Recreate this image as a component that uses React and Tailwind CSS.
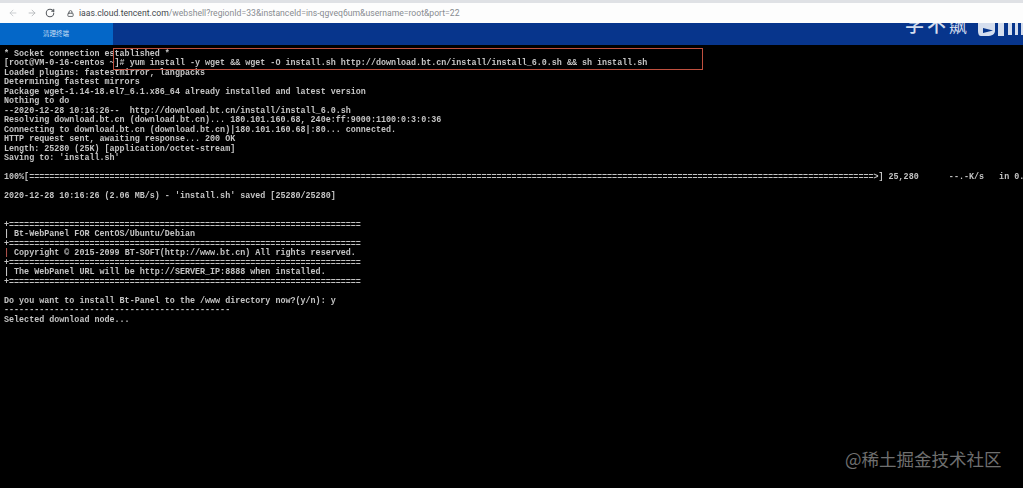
import React from "react";
import { ArrowLeft, ArrowRight, RotateCw, Lock } from "lucide-react";

const rule = "+" + "=".repeat(70);

const beforeProgress = [
  "* Socket connection established *",
  "[root@VM-0-16-centos ~]# yum install -y wget && wget -O install.sh http://download.bt.cn/install/install_6.0.sh && sh install.sh",
  "Loaded plugins: fastestmirror, langpacks",
  "Determining fastest mirrors",
  "Package wget-1.14-18.el7_6.1.x86_64 already installed and latest version",
  "Nothing to do",
  "--2020-12-28 10:16:26--  http://download.bt.cn/install/install_6.0.sh",
  "Resolving download.bt.cn (download.bt.cn)... 180.101.160.68, 240e:ff:9000:1100:0:3:0:36",
  "Connecting to download.bt.cn (download.bt.cn)|180.101.160.68|:80... connected.",
  "HTTP request sent, awaiting response... 200 OK",
  "Length: 25280 (25K) [application/octet-stream]",
  "Saving to: 'install.sh'",
  " ",
  "100%[" + "=".repeat(168) + ">] 25,280      --.-K/s   in 0.",
  " ",
  "2020-12-28 10:16:26 (2.06 MB/s) - 'install.sh' saved [25280/25280]",
  " ",
  " ",
  rule,
  "| Bt-WebPanel FOR CentOS/Ubuntu/Debian",
  rule,
];

const afterCopyright = [
  rule,
  "| The WebPanel URL will be http://SERVER_IP:8888 when installed.",
  rule,
  " ",
  "Do you want to install Bt-Panel to the /www directory now?(y/n): y",
  "-".repeat(45),
  "Selected download node...",
];

const App = () => {
  return (
    <div className="relative flex h-[488px] w-[1023px] flex-col overflow-hidden bg-black">
      {/* Browser bar */}
      <div className="h-[3px] bg-[#dfe1e5]" />
      <div className="flex h-[20px] items-center bg-[#fdfdfd] pl-[8px]">
        <ArrowLeft className="h-[10px] w-[10px] text-[#c2c5c9]" strokeWidth={2} />
        <ArrowRight className="ml-[9px] h-[10px] w-[10px] text-[#b0b3b7]" strokeWidth={2} />
        <RotateCw className="ml-[8px] h-[10px] w-[10px] text-[#55595e]" strokeWidth={2.5} />
        <Lock className="ml-[12px] h-[7px] w-[7px] text-[#55595e]" strokeWidth={3} />
        <div className="ml-[5px] font-['Roboto',sans-serif] text-[8.65px] text-[#888c91]">
          <span className="text-[#44484d]">iaas.cloud.tencent.com</span>
          /webshell?regionId=33&amp;instanceId=ins-qgveq6um&amp;username=root&amp;port=22
        </div>
      </div>

      {/* Blue header */}
      <div className="flex h-[22px] overflow-hidden bg-[#07358c]">
        <div className="flex w-[113px] shrink-0 items-center justify-center bg-[#0467c8] pr-[1px] font-['Noto_Sans_CJK_SC',sans-serif] text-[6.5px] text-[#c5def5]">
          清理终端
        </div>
        <div className="ml-[792px] flex h-[22px] shrink-0 items-start whitespace-nowrap font-['Noto_Sans_CJK_SC',sans-serif] leading-none text-[#d5deee]">
          <span className="-mt-[9px] text-[19px] font-medium tracking-[3px]">学不</span>
          <span className="-mt-[7px] text-[18px]">飙</span>
          <svg viewBox="0 0 45 15" className="ml-[11px] h-[15px] w-[45px] shrink-0" fill="#d5deee">
            <path
              fillRule="evenodd"
              d="M0 0H17V8C17 11 14 13 9 13H3C1 13 0 11 0 8ZM5 5V10L15 7.5L5 5Z"
            />
            <path d="M20 0H26V13H20ZM30 0H34V12H30ZM37 0H40V12H37ZM43 0H45V12H43Z" />
          </svg>
        </div>
      </div>

      {/* Terminal */}
      <div className="overflow-hidden whitespace-pre pt-[4.5px] pl-[4px] font-['Liberation_Mono',monospace] text-[8.38px] leading-[9.5px] font-bold text-[#c4c4c4] blur-[0.35px]">
        {beforeProgress.map((line, i) => (
          <div key={i} className="h-[9.5px]">
            {line}
          </div>
        ))}
        <div className="h-[9.5px]">
          <span className="text-[#a9504a]">|</span> Copyright © 2015-2099 BT-SOFT(http://www.bt.cn) All rights reserved.
        </div>
        {afterCopyright.map((line, i) => (
          <div key={i} className="h-[9.5px]">
            {line}
          </div>
        ))}
      </div>

      {/* Red highlight box */}
      <div className="absolute top-[48px] left-[113px] h-[22px] w-[590px] border border-[#c0503f]" />

      {/* Watermark */}
      <div className="absolute top-[448px] left-[845px] font-['Noto_Sans_CJK_SC',sans-serif] text-[17.5px] leading-[22px] text-[#6f6f6f]">
        @稀土掘金技术社区
      </div>
    </div>
  );
};

export default App;
